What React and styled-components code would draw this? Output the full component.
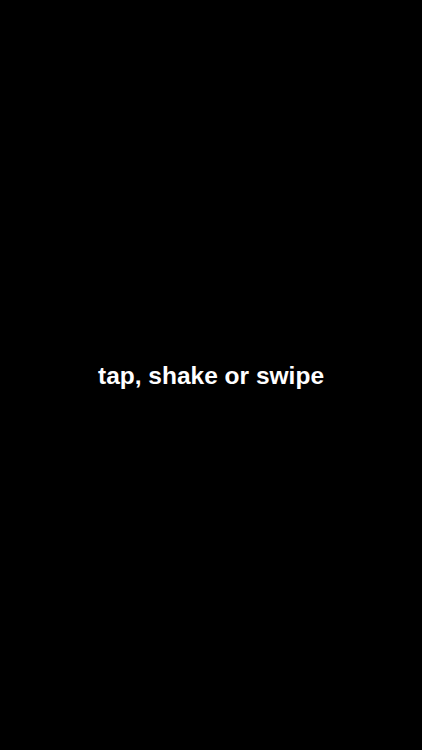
import React from "react";
import styled, { createGlobalStyle } from "styled-components";

const Global = createGlobalStyle`
  html, body { margin: 0; padding: 0; background: #000; }
  #root { height: 100vh; }
`;

const Screen = styled.div`
  height: 750px;
  width: 100%;
  background: #000;
  display: flex;
  align-items: center;
  justify-content: center;
`;

const Prompt = styled.div`
  color: #fff;
  font-family: "Liberation Sans", Arial, sans-serif;
  font-weight: bold;
  font-size: 24.5px;
  line-height: 1;
  transform: translateY(1px);
`;

export default function App() {
  return (
    <>
      <Global />
      <Screen>
        <Prompt>tap, shake or swipe</Prompt>
      </Screen>
    </>
  );
}
